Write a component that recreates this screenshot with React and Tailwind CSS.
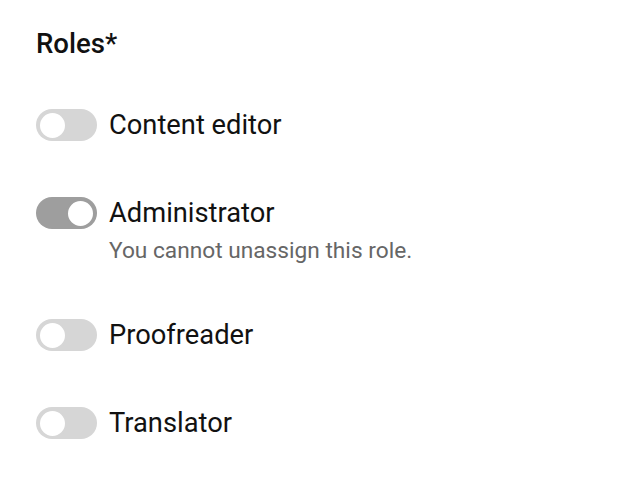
import React from "react";

function Toggle({ on }) {
  return (
    <div
      className={`relative h-[32px] w-[61px] shrink-0 rounded-full ${on ? "bg-[#9e9e9e]" : "bg-[#d6d6d6]"}`}
    >
      <div
        className={`absolute top-[1.5px] h-[29px] w-[29px] rounded-full bg-white border-[2.5px] ${on ? "right-[2px] border-[#9e9e9e]" : "left-[2px] border-[#d6d6d6]"}`}
      />
    </div>
  );
}

function Row({ label, on, help }) {
  return (
    <div className="flex flex-col">
      <div className="flex items-center gap-[12px]">
        <Toggle on={on} />
        <span className="text-[27.3px] leading-[32px] text-[#111111]">{label}</span>
      </div>
      {help && (
        <div className="pl-[73px] pt-[10px] text-[22.7px] leading-[24px] text-[#666666]">{help}</div>
      )}
    </div>
  );
}

export default function App() {
  return (
    <div
      className="w-[640px] h-[484px] bg-white pl-[36px] pt-[27px]"
      style={{ fontFamily: "Roboto, 'Liberation Sans', sans-serif" }}
    >
      <div className="text-[27.6px] leading-[34px] font-medium text-[#111111]">Roles*</div>
      <div className="mt-[48px] flex flex-col gap-[56px]">
        <Row label="Content editor" />
        <Row label="Administrator" on help="You cannot unassign this role." />
        <Row label="Proofreader" />
        <Row label="Translator" />
      </div>
    </div>
  );
}
